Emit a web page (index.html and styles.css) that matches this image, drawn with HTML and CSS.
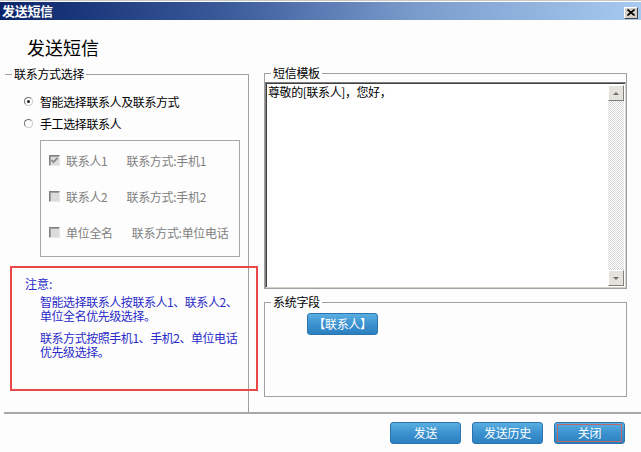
FILE: index.html
```html
<!DOCTYPE html>
<html lang="zh-CN">
<head>
<meta charset="utf-8">
<title>发送短信</title>
<link rel="stylesheet" href="styles.css">
</head>
<body>
<div class="window">
  <div class="titlebar">
    <span class="title">发送短信</span>
    <span class="close"><svg width="8" height="7" viewBox="0 0 8 7"><path d="M0.5 0.5 L7.5 6.5 M7.5 0.5 L0.5 6.5" stroke="#000" stroke-width="1.6"/></svg></span>
  </div>
  <h1 class="heading">发送短信</h1>
  <div class="main">
    <fieldset class="group group-left">
      <legend>联系方式选择</legend>
      <div class="radios">
        <div class="radio-row"><span class="radio checked"></span>智能选择联系人及联系方式</div>
        <div class="radio-row"><span class="radio"></span>手工选择联系人</div>
      </div>
      <div class="manual-box">
        <div class="check-row"><span class="checkbox"><svg width="9" height="9" viewBox="0 0 9 9"><path d="M1.5 4 L3.5 6.2 L7.5 1.8" fill="none" stroke="#8a8a8a" stroke-width="1.8"/></svg></span><span class="name">联系人1</span><span>联系方式:手机1</span></div>
        <div class="check-row"><span class="checkbox"></span><span class="name">联系人2</span><span>联系方式:手机2</span></div>
        <div class="check-row"><span class="checkbox"></span><span class="name">单位全名</span><span>联系方式:单位电话</span></div>
      </div>
      <div class="note">
        <div class="note-title">注意:</div>
        <p>智能选择联系人按联系人1、联系人2、<br>单位全名优先级选择。</p>
        <p>联系方式按照手机1、手机2、单位电话<br>优先级选择。</p>
      </div>
    </fieldset>
    <div class="right">
      <fieldset class="group group-template">
        <legend>短信模板</legend>
        <div class="textarea">
          <div class="text">尊敬的[联系人]，您好，</div>
          <div class="scrollbar">
            <span class="sb-btn"><span class="arrow-up"></span></span>
            <span class="sb-track"></span>
            <span class="sb-btn"><span class="arrow-down"></span></span>
          </div>
        </div>
      </fieldset>
      <fieldset class="group group-fields">
        <legend>系统字段</legend>
        <button class="btn field-btn">【联系人】</button>
      </fieldset>
    </div>
  </div>
  <div class="footer">
    <button class="btn">发送</button>
    <button class="btn">发送历史</button>
    <button class="btn"><span class="focus-ring">关闭</span></button>
  </div>
</div>
</body>
</html>
```
FILE: styles.css
```css
* { box-sizing: border-box; }
html, body { margin: 0; padding: 0; background: #fdfdfd; }
body {
  font-family: "Noto Sans CJK SC", "Liberation Sans", sans-serif;
  font-size: 12px;
  color: #000;
}
.window {
  width: 641px;
  height: 452px;
  background: #fdfdfd;
  border-top: 1px solid #c8c8c8;
  padding-top: 1px;
  overflow: hidden;
}
.titlebar {
  height: 18px;
  display: flex;
  align-items: center;
  justify-content: space-between;
  padding: 0 3px 0 2px;
  background: linear-gradient(to right, #0a246a 0%, #3a5a9a 35%, #7a9ccc 65%, #a6caf0 100%);
}
.title {
  color: #fff;
  font-weight: bold;
  font-size: 13px;
  line-height: 18px;
  letter-spacing: -0.3px;
}
.close {
  width: 14px;
  height: 12px;
  margin-top: 3px;
  background: #d4d0c8;
  border: 1px solid;
  border-color: #fff #404040 #404040 #fff;
  display: flex;
  align-items: center;
  justify-content: center;
}
.heading {
  margin: 15px 0 0 27px;
  font-size: 18px;
  font-weight: normal;
  line-height: 24px;
  height: 24px;
}
.main {
  display: flex;
  margin-top: 6px;
  height: 347px;
}
.group {
  border: 1px solid #a0a0a0;
  margin: 0;
  padding: 0;
  min-width: 0;
}
.group legend {
  margin-left: 7px;
  padding: 0 2px;
  line-height: 16px;
  font-size: 12px;
  letter-spacing: -0.3px;
}
.group-left {
  margin-left: 5px;
  margin-top: 1px;
  width: 244px;
  border-left: none;
  border-bottom: none;
}
.group-left legend { margin-left: 7px; }
.radios {
  padding: 8px 0 0 19px;
}
.radio-row {
  display: flex;
  align-items: center;
  height: 22px;
  letter-spacing: -0.4px;
}
.radio {
  width: 9px;
  height: 9px;
  border-radius: 50%;
  border: 1px solid;
  border-color: #707070 #c8c8c8 #c8c8c8 #707070;
  background: #fff;
  margin-right: 7px;
  display: flex;
  align-items: center;
  justify-content: center;
}
.radio.checked::after {
  content: "";
  width: 3px;
  height: 3px;
  border-radius: 50%;
  background: #202020;
}
.manual-box {
  margin: 6px 0 0 35px;
  width: 200px;
  height: 117px;
  border: 1px solid #a8a8a8;
  padding: 9px 0 0 8px;
  display: flex;
  flex-direction: column;
  gap: 16px;
  color: #808080;
}
.check-row {
  display: flex;
  align-items: center;
  height: 20px;
  letter-spacing: -0.3px;
}
.checkbox {
  width: 11px;
  height: 11px;
  border: 1px solid;
  border-color: #808080 #e8e8e8 #e8e8e8 #808080;
  background: #dcdcdc;
  box-shadow: inset 1px 1px 0 #a0a0a0;
  margin-right: 6px;
  display: flex;
  align-items: center;
  justify-content: center;
}
.check-row .name { margin-right: 19px; }
.note {
  margin: 9px 0 0 5px;
  width: 248px;
  height: 125px;
  border: 2px solid #e84848;
  padding: 8px 0 0 13px;
  color: #2a2ac8;
}
.note-title {
  line-height: 16px;
}
.note p {
  margin: 3px 0 0 15px;
  line-height: 14px;
  white-space: nowrap;
  letter-spacing: -0.45px;
}
.note p + p { margin-top: 8px; }
.right {
  margin-left: 15px;
  width: 363px;
  display: flex;
  flex-direction: column;
}
.group-template {
  padding: 1px 0 0 0;
}
.group-template legend { margin-left: 6px; }
.textarea {
  height: 206px;
  background: #fff;
  border: 1px solid;
  border-color: #808080 #d4d0c8 #d4d0c8 #808080;
  box-shadow: inset 1px 1px 0 #404040;
  display: flex;
}
.text {
  flex: 1;
  padding: 2px 2px;
  line-height: 14px;
  letter-spacing: -0.4px;
}
.scrollbar {
  width: 16px;
  margin: 2px 1px 1px 0;
  display: flex;
  flex-direction: column;
}
.sb-btn {
  width: 16px;
  height: 16px;
  background: #e4e2dc;
  border: 1px solid;
  border-color: #fff #808080 #808080 #fff;
  display: flex;
  align-items: center;
  justify-content: center;
}
.sb-track {
  flex: 1;
  background: repeating-conic-gradient(#d8d8d8 0 25%, #ffffff 0 50%) 0 0 / 2px 2px;
}
.arrow-up {
  width: 0; height: 0;
  border-left: 3px solid transparent;
  border-right: 3px solid transparent;
  border-bottom: 3px solid #707070;
}
.arrow-down {
  width: 0; height: 0;
  border-left: 3px solid transparent;
  border-right: 3px solid transparent;
  border-top: 3px solid #707070;
}
.group-fields {
  margin-top: 5px;
  height: 103px;
}
.group-fields legend { margin-left: 6px; }
.btn {
  font-family: "Noto Sans CJK SC", "Liberation Sans", sans-serif;
  font-size: 12px;
  color: #fff;
  width: 71px;
  height: 22px;
  padding: 0;
  border: 1px solid #2a74b0;
  border-radius: 3px;
  background: linear-gradient(to bottom, #5aaee0 0%, #3b92cf 50%, #2c80c0 100%);
  letter-spacing: -0.3px;
  line-height: 20px;
}
.field-btn {
  display: block;
  margin: 3px 0 0 42px;
}
.footer {
  margin-left: 4px;
  border-top: 2px solid #a8a8a8;
  display: flex;
  justify-content: flex-end;
  gap: 11px;
  padding: 8px 16px 0 0;
}
.focus-ring {
  display: block;
  margin: 1px 2px;
  height: 18px;
  line-height: 16px;
  border: 1px solid #c06868;
}
```
